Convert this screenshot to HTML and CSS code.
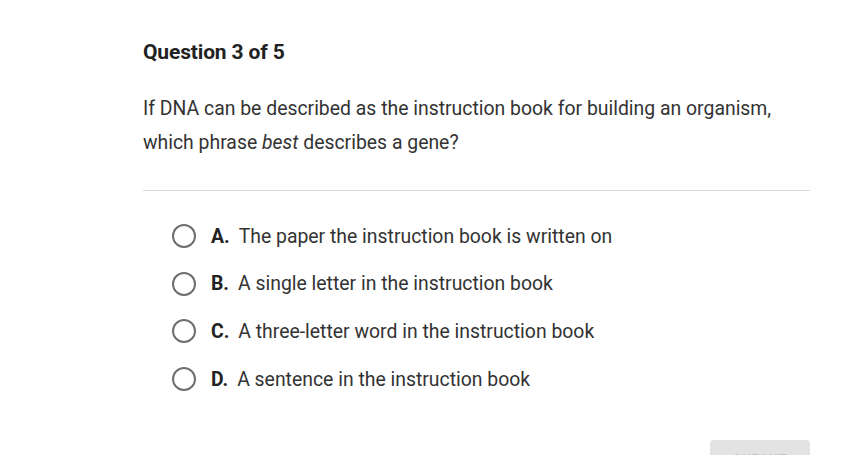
FILE: index.html
```html
<!DOCTYPE html>
<html>
<head>
<meta charset="utf-8">
<link rel="stylesheet" href="styles.css">
</head>
<body>
<div class="page">
  <div class="content">
    <h1 class="title">Question 3 of 5</h1>
    <p class="prompt">If DNA can be described as the instruction book for building an organism, which phrase <em>best</em> describes a gene?</p>
    <hr class="divider">
    <ul class="options">
      <li class="option"><span class="radio"></span><span class="letter">A.</span><span class="text">The paper the instruction book is written on</span></li>
      <li class="option"><span class="radio"></span><span class="letter">B.</span><span class="text">A single letter in the instruction book</span></li>
      <li class="option"><span class="radio"></span><span class="letter">C.</span><span class="text">A three-letter word in the instruction book</span></li>
      <li class="option"><span class="radio"></span><span class="letter">D.</span><span class="text">A sentence in the instruction book</span></li>
    </ul>
    <div class="actions"><button class="submit">SUBMIT</button></div>
  </div>
</div>
</body>
</html>
```
FILE: styles.css
```css
html, body {
  margin: 0;
  padding: 0;
  background: #ffffff;
}
body {
  font-family: Roboto, "Liberation Sans", Arial, sans-serif;
  color: #333333;
  overflow: hidden;
  height: 455px;
}
.page {
  padding: 38px 47px 0 143px;
}
.content {
  width: 667px;
}
.title {
  margin: 0;
  font-size: 21px;
  line-height: 28px;
  font-weight: 700;
  color: #222222;
  letter-spacing: -0.15px;
}
.prompt {
  margin: 26px 0 0 0;
  font-size: 19.4px;
  line-height: 34px;
  color: #333333;
}
.prompt em {
  font-style: italic;
}
.divider {
  margin: 30px 0 0 0;
  border: 0;
  border-top: 1px solid #d9d9d9;
  height: 0;
}
.options {
  list-style: none;
  margin: 33px 0 0 0;
  padding: 0 0 0 29px;
  display: flex;
  flex-direction: column;
  gap: 23.7px;
}
.option {
  display: flex;
  align-items: center;
  height: 24px;
  font-size: 19.4px;
  color: #333333;
}
.radio {
  width: 20px;
  height: 20px;
  border: 2px solid #6f6f6f;
  border-radius: 50%;
  box-sizing: content-box;
  flex: none;
  margin-right: 15px;
}
.letter {
  font-weight: 700;
  margin-right: 9px;
  color: #222222;
}
.actions {
  display: flex;
  justify-content: flex-end;
  margin-top: 49px;
}
.submit {
  width: 100px;
  height: 40px;
  border: 0;
  border-radius: 4px;
  background: #e3e3e3;
  color: #c6c6c6;
  font-family: Roboto, "Liberation Sans", Arial, sans-serif;
  font-size: 14px;
  font-weight: 700;
  letter-spacing: 0.5px;
}
```
